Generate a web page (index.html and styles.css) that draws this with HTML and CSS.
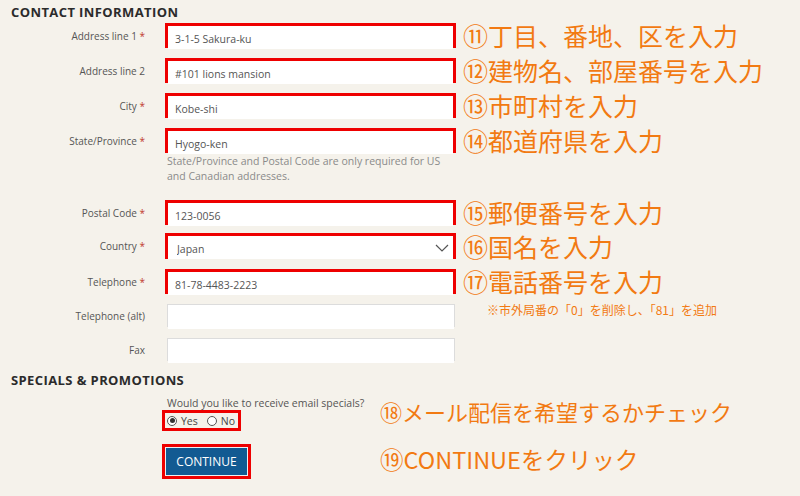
FILE: index.html
```html
<!DOCTYPE html>
<html lang="ja">
<head>
<meta charset="utf-8">
<title>Contact information</title>
<link rel="stylesheet" href="styles.css">
</head>
<body>
<div class="page">
  <h2 class="sec-title">CONTACT INFORMATION</h2>

  <div class="row r-first">
    <label class="lbl">Address line 1 <span class="req">*</span></label>
    <div class="field hl"><input class="inp" value="3-1-5 Sakura-ku"></div>
    <div class="note">⑪丁目、番地、区を入力</div>
  </div>
  <div class="row">
    <label class="lbl">Address line 2</label>
    <div class="field hl"><input class="inp" value="#101 lions mansion"></div>
    <div class="note">⑫建物名、部屋番号を入力</div>
  </div>
  <div class="row">
    <label class="lbl">City <span class="req">*</span></label>
    <div class="field hl"><input class="inp" value="Kobe-shi"></div>
    <div class="note">⑬市町村を入力</div>
  </div>
  <div class="row">
    <label class="lbl">State/Province <span class="req">*</span></label>
    <div class="field hl"><input class="inp" value="Hyogo-ken"></div>
    <div class="note">⑭都道府県を入力</div>
  </div>
  <div class="row r-help">
    <span></span>
    <p class="help">State/Province and Postal Code are only required for US and Canadian addresses.</p>
    <span></span>
  </div>

  <div class="row r-postal">
    <label class="lbl">Postal Code <span class="req">*</span></label>
    <div class="field hl"><input class="inp" value="123-0056"></div>
    <div class="note">⑮郵便番号を入力</div>
  </div>
  <div class="row r-country">
    <label class="lbl">Country <span class="req">*</span></label>
    <div class="field hl sel">
      <select class="inp"><option>Japan</option></select>
      <svg class="chev" width="14" height="8" viewBox="0 0 14 8"><path d="M1 1 L7 7 L13 1" fill="none" stroke="#555" stroke-width="1.2"/></svg>
    </div>
    <div class="note">⑯国名を入力</div>
  </div>
  <div class="row">
    <label class="lbl">Telephone <span class="req">*</span></label>
    <div class="field hl"><input class="inp" value="81-78-4483-2223"></div>
    <div class="note">⑰電話番号を入力</div>
  </div>
  <div class="row r-alt">
    <label class="lbl">Telephone (alt)</label>
    <div class="field plain"><input class="inp"></div>
    <div class="note small">※市外局番の「0」を削除し、「81」を追加</div>
  </div>
  <div class="row r-fax">
    <label class="lbl">Fax</label>
    <div class="field plain"><input class="inp"></div>
    <span></span>
  </div>

  <h2 class="sec-title sec-promo">SPECIALS &amp; PROMOTIONS</h2>

  <div class="promo-row">
    <div class="promo-left">
      <p class="question">Would you like to receive email specials?</p>
      <div class="radios">
        <label class="radio"><span class="dot on"></span>Yes</label>
        <label class="radio"><span class="dot"></span>No</label>
      </div>
    </div>
    <div class="note big n18">⑱メール配信を希望するかチェック</div>
  </div>

  <div class="submit-row">
    <div class="btn-wrap"><button class="btn">CONTINUE</button></div>
    <div class="note big n19">⑲CONTINUEをクリック</div>
  </div>
</div>
</body>
</html>
```

FILE: styles.css
```css
html, body {
  margin: 0;
  padding: 0;
  background: #f5f2eb;
}
body {
  width: 800px;
  height: 496px;
  overflow: hidden;
  font-family: "Open Sans", "Liberation Sans", sans-serif;
  color: #555;
}
.page {
  padding-top: 4px;
}
.sec-title {
  margin: 0 0 0 11px;
  font-size: 13px;
  line-height: 16px;
  font-weight: 700;
  color: #2b2b2b;
  letter-spacing: 0.4px;
}
.row {
  display: grid;
  grid-template-columns: 165px 291px 1fr;
  grid-template-rows: 25px;
  align-items: center;
  margin-top: 10px;
}
.r-first { margin-top: 3px; }
.r-help { grid-template-rows: auto; margin-top: 1px; align-items: start; }
.r-postal { margin-top: 16px; }
.r-country { margin-top: 8px; grid-template-rows: 26px; }
.r-alt { margin-top: 9px; }
.r-alt .note { align-self: start; }
.r-fax { margin-top: 9px; }

.lbl {
  text-align: right;
  padding-right: 20px;
  font-size: 10px;
  color: #555;
}
.req { color: #c0392b; }

.field {
  box-sizing: border-box;
  height: 100%;
  background: #fff;
  position: relative;
}
.field.hl { border: 3px solid #ee0000; }
.field.plain { margin: 1px 1px 1px 2px; height: 23px; border: 1px solid #dcdcdc; }
.inp {
  box-sizing: border-box;
  width: 100%;
  height: 100%;
  border: 0;
  margin: 0;
  padding: 0 0 0 7px;
  background: #fff;
  font-family: "Open Sans", "Liberation Sans", sans-serif;
  font-size: 10.5px;
  color: #555;
  outline: none;
}
.field.plain .inp { padding-left: 9px; }
select.inp {
  appearance: none;
  -webkit-appearance: none;
  padding-left: 9px;
}
.chev {
  position: absolute;
  right: 4px;
  top: 8px;
  pointer-events: none;
}

.note {
  padding-left: 7px;
  font-family: "Noto Sans CJK JP", sans-serif;
  font-size: 25px;
  line-height: 25px;
  color: #f27a12;
  white-space: nowrap;
}
.note.small {
  padding-left: 31px;
  font-size: 12px;
  line-height: 14px;
}
.help {
  margin: 0 0 0 2px;
  font-size: 10.5px;
  line-height: 15px;
  color: #8a8a8a;
  width: 285px;
}

.sec-promo { margin-top: 10px; }

.promo-row {
  display: flex;
  align-items: center;
  margin-top: 8px;
}
.promo-left {
  margin-left: 162px;
  width: 218px;
}
.question {
  margin: 0 0 0 5px;
  font-size: 10.5px;
  line-height: 14px;
  color: #555;
}
.radios {
  display: flex;
  width: max-content;
  align-items: center;
  gap: 9px;
  box-sizing: border-box;
  height: 21px;
  border: 3px solid #ee0000;
  padding: 0 3px 0 2px;
}
.radio {
  display: flex;
  align-items: center;
  gap: 4px;
  font-size: 10.5px;
  color: #444;
}
.dot {
  box-sizing: border-box;
  width: 10px;
  height: 10px;
  border: 1px solid #555;
  border-radius: 50%;
  background: #fff;
  display: flex;
  align-items: center;
  justify-content: center;
}
.dot.on::after {
  content: "";
  width: 5px;
  height: 5px;
  border-radius: 50%;
  background: #333;
}
.note.big { padding-left: 0; }
.note.n18 { font-size: 22px; margin-top: -4px; }
.note.n19 { font-size: 23.5px; margin-top: -5px; }

.submit-row {
  display: flex;
  align-items: center;
  margin-top: 13px;
}
.btn-wrap {
  margin-left: 162px;
  width: 89px;
  height: 35px;
  box-sizing: border-box;
  border: 3px solid #ee0000;
  padding: 1px;
  background: #eef0f2;
  margin-right: 129px;
}
.btn {
  width: 100%;
  height: 100%;
  border: 0;
  margin: 0;
  background: #125a92;
  color: #fff;
  font-family: "Open Sans", "Liberation Sans", sans-serif;
  font-size: 12px;
  padding: 0;
  cursor: pointer;
}
```
